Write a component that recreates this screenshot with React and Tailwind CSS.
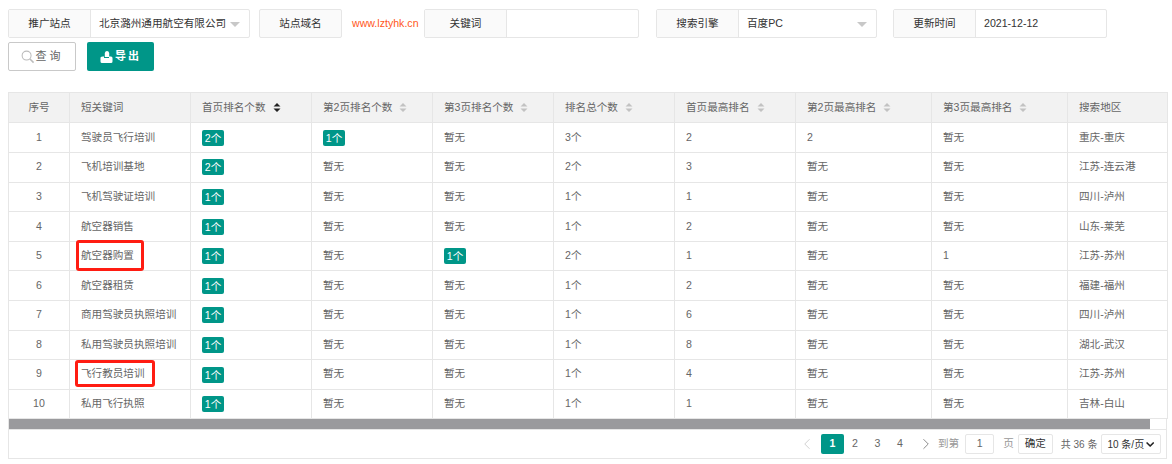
import React from "react";
import { ChevronLeft, ChevronRight, ChevronDown } from "lucide-react";

const font = "font-['Liberation_Sans','Noto_Sans_CJK_SC',sans-serif]";

const rows = [
  ["1", "驾驶员飞行培训", "2个", "1个", "暂无", "3个", "2", "2", "暂无", "重庆-重庆"],
  ["2", "飞机培训基地", "2个", "暂无", "暂无", "2个", "3", "暂无", "暂无", "江苏-连云港"],
  ["3", "飞机驾驶证培训", "1个", "暂无", "暂无", "1个", "1", "暂无", "暂无", "四川-泸州"],
  ["4", "航空器销售", "1个", "暂无", "暂无", "1个", "2", "暂无", "暂无", "山东-莱芜"],
  ["5", "航空器购置", "1个", "暂无", "1个", "2个", "1", "暂无", "1", "江苏-苏州"],
  ["6", "航空器租赁", "1个", "暂无", "暂无", "1个", "2", "暂无", "暂无", "福建-福州"],
  ["7", "商用驾驶员执照培训", "1个", "暂无", "暂无", "1个", "6", "暂无", "暂无", "四川-泸州"],
  ["8", "私用驾驶员执照培训", "1个", "暂无", "暂无", "1个", "8", "暂无", "暂无", "湖北-武汉"],
  ["9", "飞行教员培训", "1个", "暂无", "暂无", "1个", "4", "暂无", "暂无", "江苏-苏州"],
  ["10", "私用飞行执照", "1个", "暂无", "暂无", "1个", "1", "暂无", "暂无", "吉林-白山"],
];

const heads = ["序号", "短关键词", "首页排名个数", "第2页排名个数", "第3页排名个数", "排名总个数", "首页最高排名", "第2页最高排名", "第3页最高排名", "搜索地区"];
const widths = ["w-[61px]", "w-[121px]", "w-[121px]", "w-[121px]", "w-[121px]", "w-[121px]", "w-[121px]", "w-[136px]", "w-[136px]", "w-[100px]"];

function SortIcon({ active }) {
  return (
    <svg width="8" height="9" viewBox="0 0 8 9" className="ml-[7px] inline-block align-[-1px]">
      <path d="M4 0 L7.5 3.6 H0.5 Z M4 9 L7.5 5.4 H0.5 Z" fill={active ? "#222" : "#c2c2c2"} />
    </svg>
  );
}

function Label({ children }) {
  return (
    <div className="flex h-full w-[82px] shrink-0 items-center justify-center border-r border-[#e6e6e6] bg-[#fafafa] text-[#333]">
      {children}
    </div>
  );
}

function Field({ label, width, children }) {
  return (
    <div className={`flex h-[29px] ${width} shrink-0 rounded-[2px] border border-[#e6e6e6] bg-white`}>
      <Label>{label}</Label>
      {children}
    </div>
  );
}

function Caret() {
  return <span className="ml-auto mr-[9px] mt-[1px] h-0 w-0 border-x-[5px] border-t-[5px] border-x-transparent border-t-[#c8c8c8]" />;
}

function Cell({ value, col, rowIndex }) {
  if ((col >= 2 && col <= 4 && value === "1个") || (col === 2 && value === "2个")) {
    return <span className="inline-block h-[16px] w-[22px] rounded-[2px] bg-[#009688] text-center align-middle text-[10.6px] leading-[16px] text-white">{value}</span>;
  }
  if (col === 1 && rowIndex === 4) {
    return (
      <>
        {value}
        <span className="absolute left-[6px] top-[-2px] h-[31px] w-[68px] rounded-[3px] border-[3px] border-[#ff1c12]" />
      </>
    );
  }
  if (col === 1 && rowIndex === 8) {
    return (
      <>
        {value}
        <span className="absolute left-[5px] top-[0px] h-[27px] w-[80px] rounded-[3px] border-[3px] border-[#ff1c12]" />
      </>
    );
  }
  return value;
}

export default function App() {
  return (
    <div className={`${font} h-[464px] w-[1172px] overflow-hidden whitespace-nowrap bg-white text-[10.6px] text-[#666]`}>
      <div className="flex items-center pl-2 pt-[9px]">
        <Field label="推广站点" width="w-[242px]">
          <div className="flex flex-1 items-center pl-[8px] text-[#333]">北京潞州通用航空有限公司<Caret /></div>
        </Field>
        <div className="ml-[9px]">
          <div className="flex h-[29px] w-[83px] items-center justify-center rounded-[2px] border border-[#e6e6e6] bg-[#fafafa] text-[#333]">站点域名</div>
        </div>
        <div className="ml-[10px] w-[72px] text-[10.6px] text-[#ff5722]">www.lztyhk.cn</div>
        <Field label="关键词" width="w-[215px]"><div className="flex-1" /></Field>
        <div className="ml-[17px]">
          <Field label="搜索引擎" width="w-[221px]">
            <div className="flex flex-1 items-center pl-2 text-[#333]">百度PC<Caret /></div>
          </Field>
        </div>
        <div className="ml-[16px]">
          <Field label="更新时间" width="w-[214px]">
            <div className="flex flex-1 items-center pl-2 text-[#333]">2021-12-12</div>
          </Field>
        </div>
      </div>

      <div className="mt-[4px] flex pl-2">
        <button className="flex h-[29px] w-[68px] items-center justify-center rounded-[2px] border border-[#c9c9c9] bg-white text-[#666]">
          <svg width="14" height="14" viewBox="0 0 15 15" fill="none" stroke="#bbb" strokeWidth="1.1">
            <circle cx="6" cy="6" r="4.8" />
            <path d="M9.6 9.6 L13.5 13.5" strokeWidth="1.6" />
          </svg>
          <span className="ml-[1px] text-[11px] tracking-[3px]">查询</span>
        </button>
        <button className="ml-[11px] flex h-[29px] w-[67px] items-center justify-center rounded-[2px] bg-[#009688] text-white">
          <svg width="13" height="12" viewBox="0 0 13 12" fill="#fff" className="mr-[2px]">
            <path d="M0.5 6.5 Q1 5.5 3 5.5 H4 V7 H9 V5.5 H11 Q12.5 5.5 12.5 7 V10.5 Q12.5 12 11 12 H2 Q0.5 12 0.5 10.5 Z" />
            <path d="M7 0 Q8.8 0 9.2 2 L9.2 6 H4.8 V2 Q5.2 0 7 0 Z" />
          </svg>
          <span className="text-[11px] font-bold tracking-[2px]">导出</span>
        </button>
      </div>

      <div className="ml-2 mt-[21px] w-[1159px]">
        <table className="w-full table-fixed border-collapse">
          <thead>
            <tr className="h-[30.4px] bg-[#f2f2f2]">
              {heads.map((h, i) => (
                <th key={h} className={`${widths[i]} border border-[#e6e6e6] px-[11px] text-[10.6px] font-normal ${i === 0 ? "text-center" : "text-left"}`}>
                  {h}
                  {i >= 2 && i <= 8 && <SortIcon active={i === 2} />}
                </th>
              ))}
            </tr>
          </thead>
          <tbody>
            {rows.map((row, r) => (
              <tr key={row[0]} className="h-[29.6px]">
                {row.map((v, c) => (
                  <td key={c} className={`relative border border-[#e6e6e6] px-[11px] py-0 ${c === 0 ? "text-center" : ""}`}>
                    <Cell value={v} col={c} rowIndex={r} />
                  </td>
                ))}
              </tr>
            ))}
          </tbody>
        </table>

        <div className="h-[11px] w-full border-x border-b border-[#e6e6e6]">
          <div className="h-[10px] w-[1141px] bg-[#9a9a9d]" />
        </div>

        <div className="flex h-[29px] items-center border-x border-b border-[#e6e6e6] text-[#666]">
          <ChevronLeft size={18} strokeWidth={1} className="ml-[789px] text-[#c2c2c2]" />
          <span className="ml-[5px] flex h-[20px] w-[23px] items-center justify-center rounded-[2px] bg-[#009688] font-bold text-white">1</span>
          <span className="w-[22px] text-center">2</span>
          <span className="w-[23px] text-center">3</span>
          <span className="w-[22px] text-center">4</span>
          <ChevronRight size={18} strokeWidth={1} className="ml-[6px] text-[#666]" />
          <span className="ml-[3px] text-[#999]">到第</span>
          <span className="ml-[6px] flex h-[20px] w-[29px] items-center justify-center rounded-[2px] border border-[#e6e6e6]">1</span>
          <span className="ml-[9px] text-[#999]">页</span>
          <span className="ml-[4px] flex h-[20px] w-[35px] items-center justify-center rounded-[2px] border border-[#e6e6e6] text-[#333]">确定</span>
          <span className="ml-[8px] text-[10px]">共 36 条</span>
          <span className="ml-[4px] flex h-[20px] w-[60px] items-center rounded-[2px] border border-[#e6e6e6] pl-[5px] text-[10px] text-[#333]">
            10 条/页
            <ChevronDown size={13} strokeWidth={3.2} className="ml-auto mr-[4px] text-[#222]" />
          </span>
        </div>
      </div>
    </div>
  );
}
